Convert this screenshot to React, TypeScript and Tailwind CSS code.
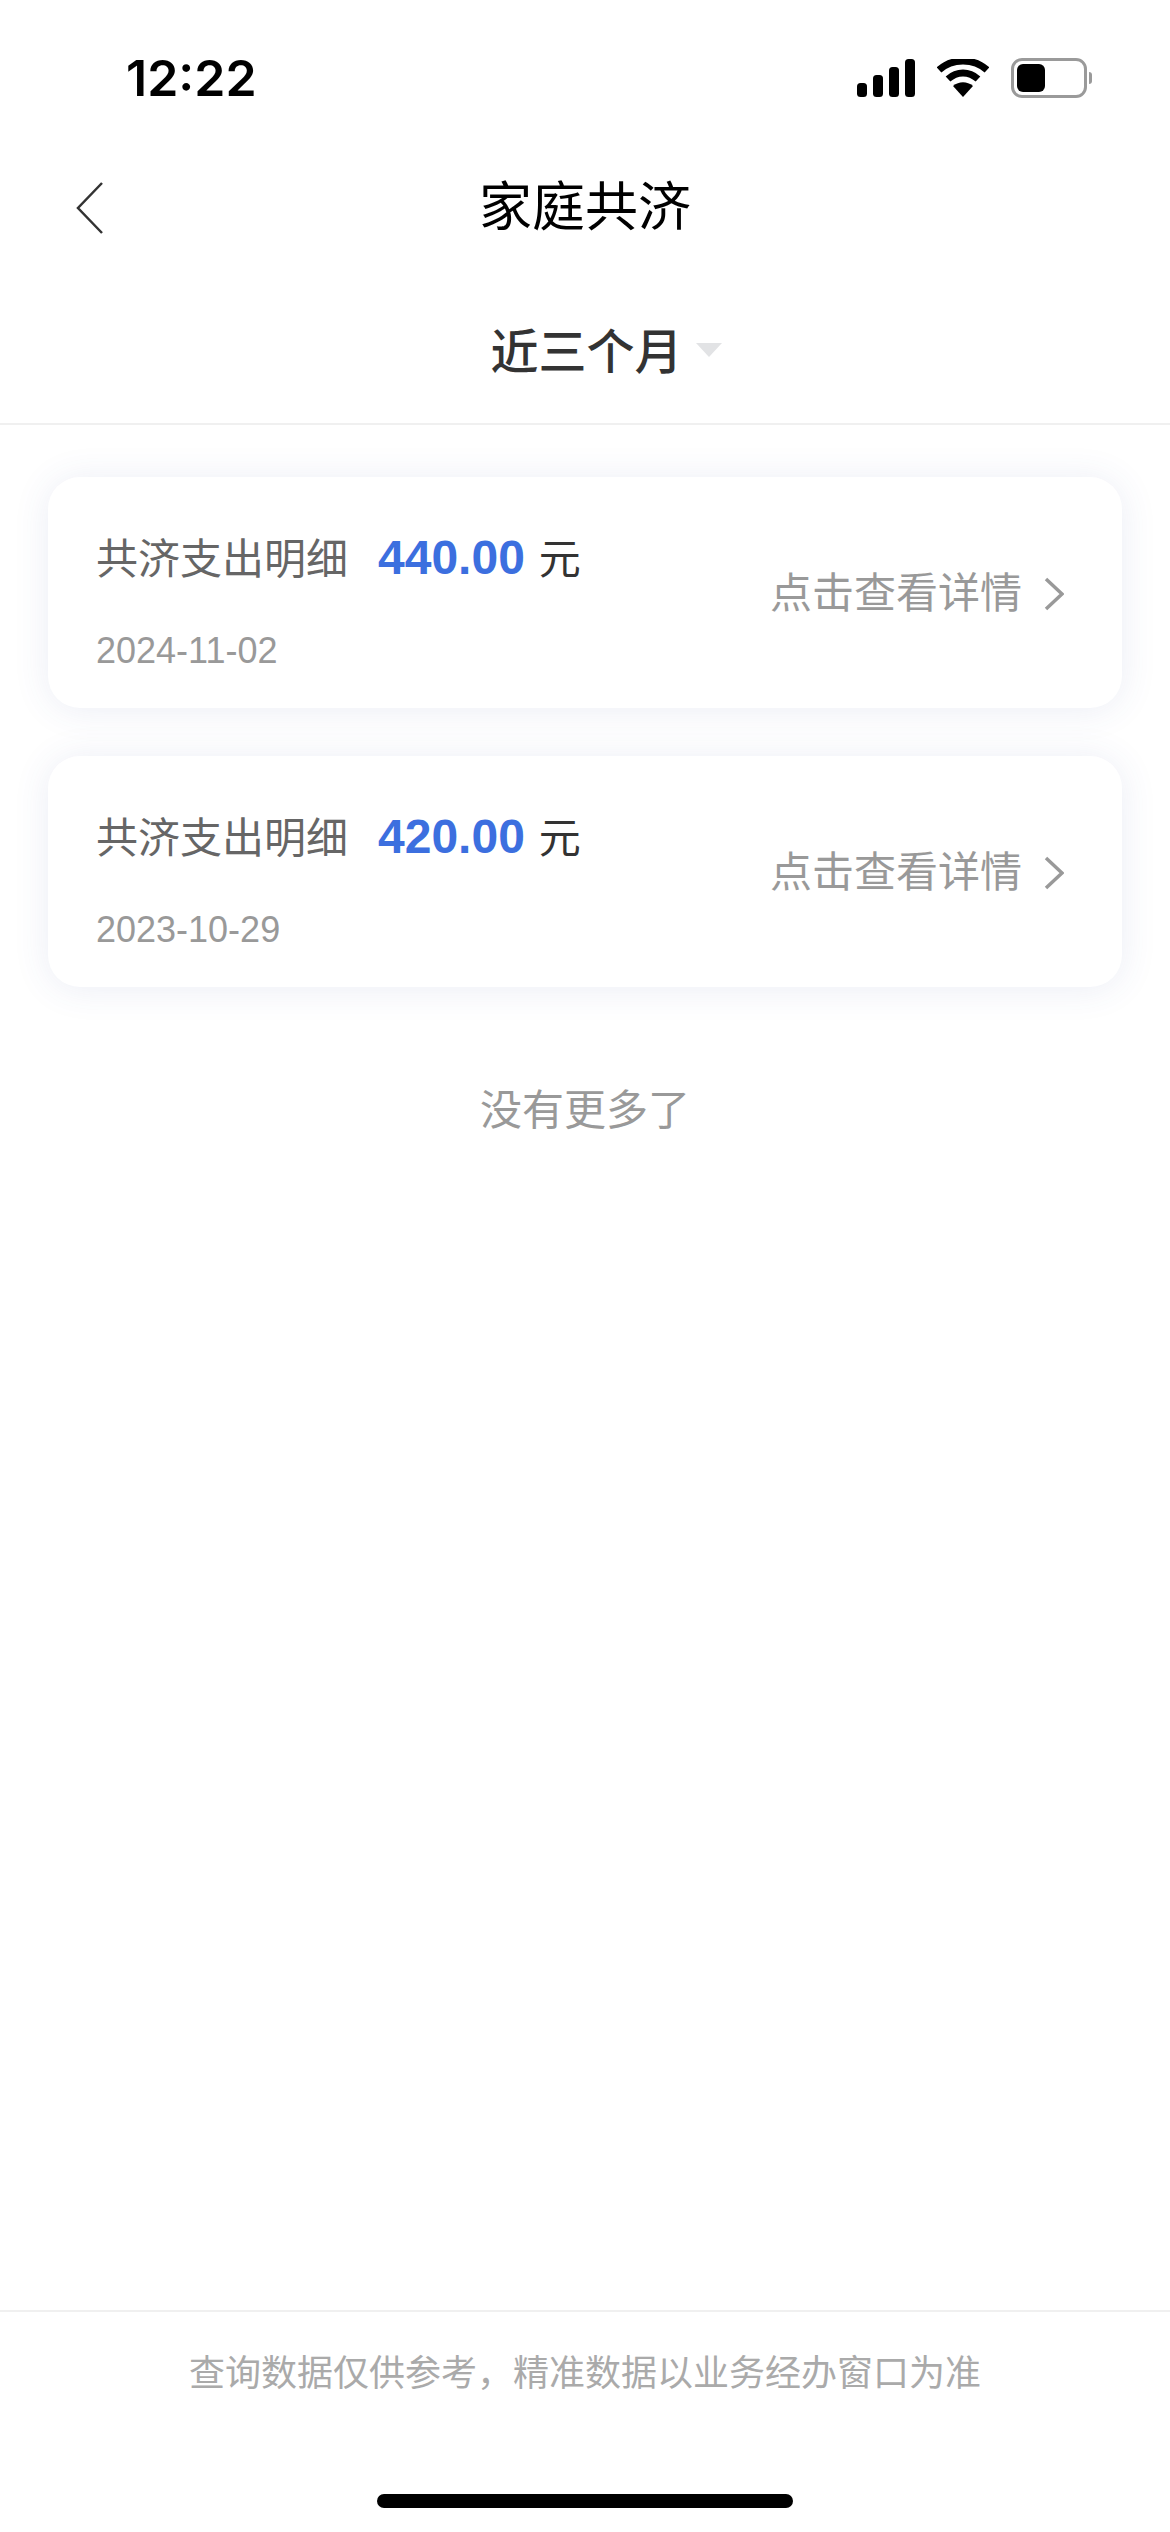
const FONT = "font-['Liberation_Sans','Noto_Sans_CJK_SC',sans-serif]";

const records = [
  { amount: '440.00', date: '2024-11-02' },
  { amount: '420.00', date: '2023-10-29' },
];

function StatusBar() {
  return (
    <div className="flex h-[136px] shrink-0 items-start justify-between pl-[126px] pr-[78px] pt-[52px]">
      <span className="font-['Inter',sans-serif] text-[50px] leading-[52px] font-semibold text-black">12:22</span>
      <div className="mt-[6px] flex items-center gap-[22px]">
        <svg width="58" height="38" viewBox="0 0 58 38" fill="#000">
          <rect x="0" y="24" width="10" height="14" rx="3.5" />
          <rect x="16" y="16" width="10" height="22" rx="3.5" />
          <rect x="32" y="8" width="10" height="30" rx="3.5" />
          <rect x="48" y="0" width="10" height="38" rx="3.5" />
        </svg>
        <svg width="52" height="38" viewBox="0 0 52 38" fill="none">
          <path d="M2 11 C15 -1 37 -1 50 11" stroke="#000" strokeWidth="7" />
          <path d="M11 20 C20 12 32 12 41 20" stroke="#000" strokeWidth="7" />
          <path d="M16 27 C22 22 30 22 36 27 L26 38 Z" fill="#000" />
        </svg>
        <div className="flex items-center gap-[2px]">
          <div className="h-[40px] w-[76px] rounded-[11px] border-[3px] border-[#9a9a9a] p-[3px]">
            <div className="h-full w-[28px] rounded-[6px] bg-black" />
          </div>
          <div className="h-[12px] w-[3px] rounded-r-full bg-[#9a9a9a]" />
        </div>
      </div>
    </div>
  );
}

function RecordCard({ amount, date }: { amount: string; date: string }) {
  return (
    <div className="flex h-[231px] items-center justify-between rounded-[32px] bg-white pl-[48px] pr-[58px] shadow-[0_2px_36px_rgba(60,80,160,0.1)]">
      <div className="flex flex-col self-start pt-[51px]">
        <div className="flex items-baseline">
          <span className="text-[42px] leading-[60px] text-[#666]">共济支出明细</span>
          <span className="ml-[30px] text-[48px] leading-[60px] font-bold text-[#3c6fdf]">{amount}</span>
          <span className="ml-[14px] text-[42px] leading-[60px] text-[#333]">元</span>
        </div>
        <span className="mt-[40px] text-[36px] leading-[42px] text-[#999]">{date}</span>
      </div>
      <div className="mt-[3px] flex items-center gap-[22px]">
        <span className="text-[42px] leading-[60px] text-[#999]">点击查看详情</span>
        <svg width="20" height="34" viewBox="0 0 20 34" fill="none">
          <path d="M2 2 L18 17 L2 32" stroke="#999" strokeWidth="3.5" />
        </svg>
      </div>
    </div>
  );
}

export default function App() {
  return (
    <div className={`${FONT} flex h-[2532px] w-[1170px] flex-col bg-white`}>
      <StatusBar />

      {/* Nav bar */}
      <div className="relative flex h-[144px] shrink-0 items-center justify-center">
        <svg className="absolute left-[76px] top-[46px]" width="28" height="52" viewBox="0 0 28 52" fill="none">
          <path d="M26 1 L2 26 L26 51" stroke="#333" strokeWidth="2.5" />
        </svg>
        <span className="text-[53px] leading-[60px] text-black">家庭共济</span>
      </div>

      {/* Filter */}
      <div className="flex h-[145px] shrink-0 items-center justify-center gap-[13px] border-b-2 border-[#f0f0f0] pl-[42px]">
        <span className="mt-[3px] text-[48px] leading-[60px] font-medium text-[#333]">近三个月</span>
        <svg className="mb-[4px]" width="26" height="14" viewBox="0 0 26 14">
          <path d="M0 0 H26 L13 14 Z" fill="#e2e3e5" />
        </svg>
      </div>

      {/* Records */}
      <div className="flex flex-col gap-[48px] px-[48px] pt-[52px]">
        {records.map((r) => (
          <RecordCard key={r.date} amount={r.amount} date={r.date} />
        ))}
      </div>

      <div className="mt-[94px] text-center text-[42px] leading-[60px] text-[#999]">没有更多了</div>

      {/* Footer */}
      <div className="mt-auto flex h-[222px] shrink-0 flex-col items-center border-t-2 border-[#f0f0f0] pt-[37px]">
        <span className="text-[36px] leading-[50px] text-[#aaa]">查询数据仅供参考，精准数据以业务经办窗口为准</span>
        <div className="mt-[95px] h-[14px] w-[416px] rounded-full bg-black" />
      </div>
    </div>
  );
}
